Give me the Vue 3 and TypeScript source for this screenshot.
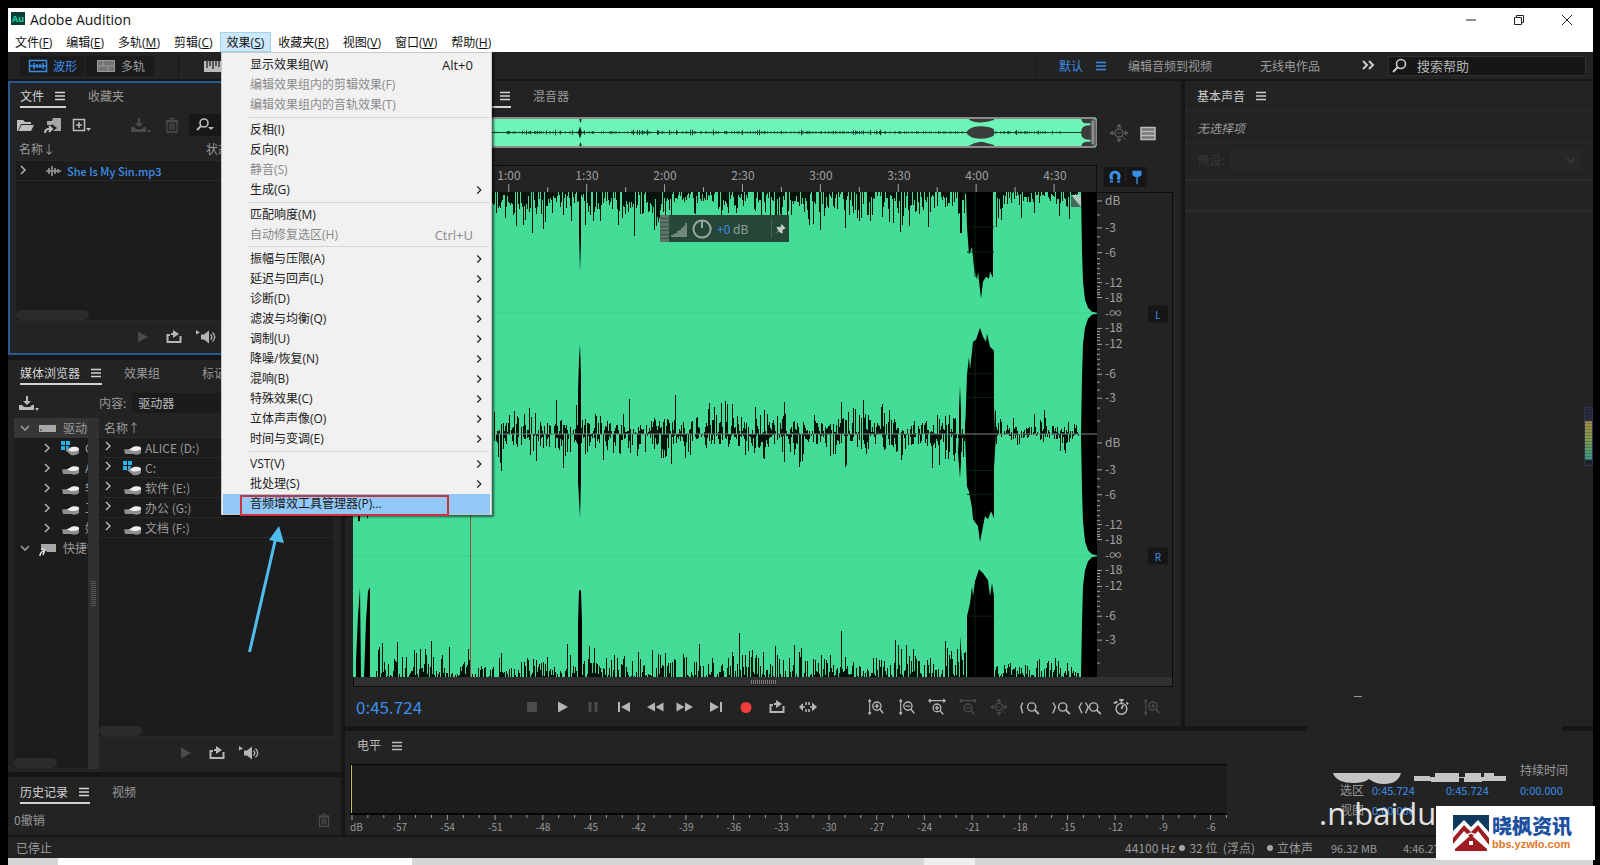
<script setup lang="ts">
import { h } from 'vue'

const art: Record<string, string> = {
  menu: '<path d="M5 6.500h10M5 10h10M5 13.500h10" stroke="currentColor" stroke-width="1.500"/>',
  folder: '<path d="M2 16V5h6l2 2h6v2H6L3 16zM6.500 10H19l-3 6H3.500z" fill="currentColor"/>',
  importer: '<path d="M4 10V6h5l1-3h8v13h-8l4-3-5-4v1z" fill="currentColor" opacity=".85"/><path d="M2 18q0-4 4-4h3m-3-3 3 3-3 3" fill="none" stroke="currentColor" stroke-width="2"/>',
  add: '<path d="M2.500 4.500h11v11h-11zM8 7v6M5 10h6" fill="none" stroke="currentColor" stroke-width="1.500"/><path d="M15 13h5l-2.500 3z" fill="currentColor"/>',
  tray: '<path d="M1 12h3l2 2h6l2-2h2v5H1zM8 3h2v5h3l-4 4-4-4h3zM17 15h4l-2 3z" fill="currentColor"/>',
  trash: '<path d="M5 6.500h10V17H5zM4 5.500h12M8 3.500h4M8 8v7M10 8v7M12 8v7" fill="none" stroke="currentColor" stroke-width="1.300"/>',
  find: '<circle cx="10" cy="8" r="4.500" fill="none" stroke="currentColor" stroke-width="1.600"/><path d="m7 11-5 5" stroke="currentColor" stroke-width="2"/>',
  findmenu: '<circle cx="9" cy="8" r="4" fill="none" stroke="currentColor" stroke-width="1.600"/><path d="m6 11-4 4" stroke="currentColor" stroke-width="2"/><path d="M13 12h6l-3 3z" fill="currentColor"/>',
  wavelet: '<path d="M3 10h15M6 7v6M9 5v10M12 7v6M15 8v4" stroke="currentColor" stroke-width="1.600"/>',
  waveview: '<path d="M1.500 4.500h17v11h-17zM2 10h16M6 7v6M9 8v4M12 8v4M15 7v6" fill="none" stroke="currentColor" stroke-width="1.500"/>',
  tracks: '<path d="M1 4h18v12H1z" fill="currentColor" opacity=".7"/><path d="M1.500 4.500h17v11h-17zM2 10h17M7 4v6M12 10v6" fill="none" stroke="currentColor"/>',
  spectral: '<path d="M1 5h18v11H1z" fill="currentColor"/><path d="M4 5v7M7 5v5M10 5v8M13 5v5M16 5v6" stroke="#222" stroke-width="1.300"/>',
  stop: '<path d="M5 5h10v10H5z" fill="currentColor"/>',
  play: '<path d="M5 4.500 15 10 5 15.500z" fill="currentColor"/>',
  pause: '<path d="M5.500 5h3v10h-3zM11.500 5h3v10h-3z" fill="currentColor"/>',
  first: '<path d="M4 5h2v10H4zM16 5v10L7 10z" fill="currentColor"/>',
  rewind: '<path d="M10 5.500v9L2 10zM18.500 5.500v9l-8-4.500z" fill="currentColor"/>',
  forward: '<path d="M1.500 5.500v9l8-4.500zM10 5.500v9l8-4.500z" fill="currentColor"/>',
  last: '<path d="M14 5h2v10h-2zM4 5v10l9-5z" fill="currentColor"/>',
  record: '<circle cx="10" cy="10.500" r="5.500" fill="#f23b3b"/>',
  loop: '<path d="M6 8H3.500v7h13V9M7 7h6" fill="none" stroke="currentColor" stroke-width="2"/><path d="m9 3 6 4-6 4z" fill="currentColor"/>',
  skip: '<path d="M3 10h4M12 10h4M8 5v3M8 12v3M11 5v3M11 12v3" stroke="currentColor" stroke-width="1.600"/><path d="m5 6-4 4 4 4zM14 5.500l5 4.500-5 4.500z" fill="currentColor"/>',
  speaker: '<path d="M1 3l4 2.500-4 2zM6 7.500h3l5-4v13l-5-4H6z" fill="currentColor"/><path d="M15.500 7.500q2.500 2.500 0 5M17.500 5.500q4.500 4.500 0 9" fill="none" stroke="currentColor" stroke-width="1.300"/>',
  zinv: '<path d="M3 2v16M1.500 4 3 2l1.500 2M1.500 16 3 18l1.500-2" fill="none" stroke="currentColor" stroke-width="1.300"/><circle cx="11" cy="9" r="4.600" fill="none" stroke="currentColor" stroke-width="1.500"/><path d="M8.500 9h5M11 6.500v5M14 12l4 5" stroke="currentColor" stroke-width="1.600"/>',
  zoutv: '<path d="M3 2v16M1.500 4 3 2l1.500 2M1.500 16 3 18l1.500-2" fill="none" stroke="currentColor" stroke-width="1.300"/><circle cx="11" cy="9" r="4.600" fill="none" stroke="currentColor" stroke-width="1.500"/><path d="M8.500 9h5M14 12l4 5" stroke="currentColor" stroke-width="1.600"/>',
  zinh: '<path d="M1 3h18M3 1 1 3l2 2M17 1l2 2-2 2" fill="none" stroke="currentColor" stroke-width="1.400"/><circle cx="10" cy="11" r="4.300" fill="none" stroke="currentColor" stroke-width="1.500"/><path d="M7.500 11h5M10 8.500v5M13 14l4 4" stroke="currentColor" stroke-width="1.600"/>',
  zouth: '<path d="M1 3h18M3 1 1 3l2 2M17 1l2 2-2 2" fill="none" stroke="currentColor" stroke-width="1.400"/><circle cx="10" cy="11" r="4.300" fill="none" stroke="currentColor" stroke-width="1.500"/><path d="M7.500 11h5M13 14l4 4" stroke="currentColor" stroke-width="1.600"/>',
  zfull: '<circle cx="10" cy="10" r="4" fill="none" stroke="currentColor" stroke-width="1.400"/><path d="M8 10h4M13 13l4 4M1 10l3-2v4zM19 10l-3-2v4zM10 1 8 4h4zM10 19l-2-3h4z" fill="currentColor" stroke="currentColor" stroke-width="1"/>',
  zleft: '<path d="M3 5 1 10l2 7" fill="none" stroke="currentColor" stroke-width="1.600"/><circle cx="13" cy="10" r="4.600" fill="none" stroke="currentColor" stroke-width="1.600"/><path d="m16 13 5 5" stroke="currentColor" stroke-width="2"/>',
  zright: '<path d="m2 5 3 5-3 7" fill="none" stroke="currentColor" stroke-width="1.600"/><circle cx="13" cy="10" r="4.600" fill="none" stroke="currentColor" stroke-width="1.600"/><path d="m16 13 5 5" stroke="currentColor" stroke-width="2"/>',
  zsel: '<path d="m1 5-3 5 3 7M5 5l3 5-3 7" fill="none" stroke="currentColor" stroke-width="1.600"/><circle cx="14" cy="10" r="4.600" fill="none" stroke="currentColor" stroke-width="1.600"/><path d="m17 13 5 5" stroke="currentColor" stroke-width="2"/>',
  timer: '<circle cx="10.500" cy="12" r="6" fill="none" stroke="currentColor" stroke-width="1.600"/><path d="M8 2h5M10.500 3v4M2 6l4-2M16 5l2 2M10.500 12l2-4" stroke="currentColor" stroke-width="2"/>',
  list: '<path d="M3 4.500h14v12H3z" fill="#777" stroke="currentColor" stroke-width="1.500"/><path d="M3 8.500h14M3 12.500h14" stroke="currentColor" stroke-width="1.500"/>',
  magnet: '<path d="M6 16v-5a4.500 4.500 0 1 1 8 0v5" fill="none" stroke="currentColor" stroke-width="3.500"/><path d="M3 13.500h14" stroke="#161616" stroke-width="1"/>',
  marker: '<path d="M5 3h10v5l-3 2H8L5 8z" fill="currentColor"/><path d="M10 9v9" stroke="currentColor" stroke-width="1.500"/>',
  right: '<path d="m8 6 4 4-4 4" fill="none" stroke="currentColor" stroke-width="1.400"/>',
  down: '<path d="m6 8 4 4 4-4" fill="none" stroke="currentColor" stroke-width="1.600"/>',
  more: '<path d="m5 5 4 4-4 4M11 5l4 4-4 4" fill="none" stroke="currentColor" stroke-width="2"/>',
  drive: '<path d="M2 11.500 8 11l4-2q7-1 7 3v3q-3 3-8 1H3z" fill="#909090"/><path d="m7 11.500 5-3q8-1 7 3-4 2-8 1.500z" fill="#efefef"/>',
  sysdrive: '<path d="M5 12l6-3q8-1 8 3v3q-3 3-8 2z" fill="#909090"/><path d="m8 12 4-3q7-1 7 3-4 2-8 1.500z" fill="#efefef"/><path d="M1 3h4v4H1zM6 3h4v4H6zM1 8h4v4H1zM6 8h3l-1 3H6z" fill="#25b3e8"/>',
  rack: '<path d="M1 7h17v7H1z" fill="#a8a8a8"/><path d="M2 12h2" stroke="#333"/>',
  shortcut: '<path d="M3 6h15v8H9l-2-3H3z" fill="#a8a8a8"/><path d="M2 18q0-4 4-5M3 11l4 1-2 5" fill="none" stroke="#ddd" stroke-width="1.500"/>',
  pin: '<path d="m11 3 6 6-2 .5-2.500 2.500.5 3-2 1-3.500-3.500L3 17l4-5.500L4.500 8l2-1 3 .5L11 5z" fill="currentColor"/>'
}
const Ic = (p: { n: string }) => h('svg', { viewBox: '0 0 20 20', class: 'ic', 'aria-hidden': 'true', innerHTML: art[p.n] })

const menubar = [['文件', 'F'], ['编辑', 'E'], ['多轨', 'M'], ['剪辑', 'C'], ['效果', 'S'], ['收藏夹', 'R'], ['视图', 'V'], ['窗口', 'W'], ['帮助', 'H']]

interface Item { t: string; off?: boolean; sub?: boolean; key?: string; hot?: boolean }
const sub = (t: string): Item => ({ t, sub: true })
const groups: Item[][] = [
  [{ t: '显示效果组(W)', key: 'Alt+0' }, { t: '编辑效果组内的剪辑效果(F)', off: true }, { t: '编辑效果组内的音轨效果(T)', off: true }],
  [{ t: '反相(I)' }, { t: '反向(R)' }, { t: '静音(S)', off: true }, sub('生成(G)')],
  [{ t: '匹配响度(M)' }, { t: '自动修复选区(H)', off: true, key: 'Ctrl+U' }],
  ['振幅与压限(A)', '延迟与回声(L)', '诊断(D)', '滤波与均衡(Q)', '调制(U)', '降噪/恢复(N)', '混响(B)', '特殊效果(C)', '立体声声像(O)', '时间与变调(E)'].map(sub),
  [sub('VST(V)'), sub('批处理(S)'), { t: '音频增效工具管理器(P)...', hot: true }]
]

const tree = [['sysdrive', 'C:'], ['drive', 'ALICE'], ['drive', '软件'], ['drive', '工作'], ['drive', '娱乐']]
const drives = [['drive', 'ALICE (D:)'], ['sysdrive', 'C:'], ['drive', '软件 (E:)'], ['drive', '办公 (G:)'], ['drive', '文档 (F:)']]
const times = ['0:30', '1:00', '1:30', '2:00', '2:30', '3:00', '3:30', '4:00', '4:30']
const transport = [['stop', '停止', 1], ['play', '播放', 0], ['pause', '暂停', 1], ['first', '移到开头', 0], ['rewind', '快退', 0], ['forward', '快进', 0], ['last', '移到结尾', 0], ['record', '录制', 0], ['loop', '循环播放', 0], ['skip', '跳过所选项目', 0]] as const
const zooms = [['zinv', '放大振幅', 0], ['zoutv', '缩小振幅', 0], ['zinh', '放大时间', 0], ['zouth', '缩小时间', 1], ['zfull', '全部缩小', 1], ['zleft', '放大入点', 0], ['zright', '放大出点', 0], ['zsel', '缩放至选区', 0], ['timer', '缩放至时间', 0], ['zinv', '缩放所选音轨', 1]] as const
const levels = Array.from({ length: 18 }, (_, i) => String(-57 + i * 3))

/* Amplitude scale: label and offset inside one 243-unit channel */
const marks: [string, number][] = [['dB', 8], ['-3', 35], ['-6', 60], ['-12', 90], ['-18', 105], ['-∞', 121], ['-18', 136], ['-12', 152], ['-6', 182], ['-3', 206]]
const scale = [0, 243].flatMap(o => marks.map(([t, y]) => ({ t, top: ((y + o) / 486) * 100 })))
const scaleTicks = [0, 243].flatMap(o => [8, 22, 35, 44, 52, 60, 66, 71, 76, 81, 86, 90, 94, 97, 100, 102, 105, 136, 139, 142, 145, 148, 152, 157, 162, 167, 172, 177, 182, 190, 198, 206, 216, 229].map(y => `M0 ${y + o}h${marks.some(m => m[1] === y) ? 5 : 3}`)).join('')

/* Waveform of the open clip, 744 x 486 units */
let seed = 20177
const rnd = () => ((seed = (seed * 1103515245 + 12345) % 2147483648) / 2147483648)
function noise(y: number, dir: number, max: number, floor: number, from: number, gap: number): string {
  let d = ''
  let swell = 0.6
  for (let x = from; x < 726; x++) {
    if (x % 11 === 0) swell = 0.35 + rnd() * 0.65
    const quiet = x > 645 ? 0.65 : 1
    if (x > 612 && x < 642) continue
    let len = (Math.pow(rnd(), 1.8) * max + rnd() * floor) * swell * quiet
    if (rnd() < 0.02) len = max * (0.9 + rnd() * 0.4) * quiet
    if (rnd() < gap || len < 1) continue
    d += `M${x} ${y}h1v${Math.round(len) * dir}h-1z`
  }
  return d
}
const waveNoise = noise(0, 1, 34, 14, 130, 0.2) + noise(242, -1, 30, 6, 130, 0.25) + noise(242, 1, 30, 8, 130, 0.25) + noise(486, -1, 36, 4, 22, 0.3)
const shapes = [
  'M226 0V40L227 80 228 50V0z',
  'M225 243V200L226 168 227 152 228 185 228 290 227 327 225 290z',
  'M225 486V432L226 399H228L229 430V486z',
  'M607 0V41h2V0zM606 243V218L607 194 608 220V270L607 287 605 260zM607 486V445L609 470V486z',
  'M613 0L614 35 616 63 619 55 621 76 624 88 625 80 628 107 630 90 633 85 636 87 637 80 640 86V0z',
  'M612 243L614 183 616 165 617 178 620 150 623 148 627 136 630 145 633 150 634 142 637 155 641 159V243L642 215 643 243 641 276V327L638 320 635 328 632 325 630 335 627 351 625 335 620 328 619 317 616 300 614 295z',
  'M614 486V425L617 412 619 395 620 405 622 390 626 378 630 382 635 389 637 405 639 392 641 405V486z',
  'M728 0L729 60 730 90 732 108 735 116 739 120 744 121V0zM744 122L739 123 735 127 732 136 730 152 729 185 728 243 729 300 730 330 732 350 735 359 739 363 744 364V122zM744 365L739 366 735 370 732 379 730 395 729 430 728 486H744z',
  'M3 486V470L5 425 7 396 8 486zM11 486L13 430 15 400 17 396V486zM5 300V330L7 330V300zM14 300V327h1V300z'
].join('')
const miniNoise = (() => {
  let d = ''
  for (let x = 130; x < 708; x++) {
    if (x > 610 && x < 642) continue
    const a = rnd() * 1.2 + (rnd() < 0.06 ? 1.5 : 0)
    d += `M${x} ${15 - a}h1v${a * 2}h-1z`
    if (rnd() < 0.15) d += `M${x} 0h1v2h-1zM${x} 28h1v2h-1z`
  }
  return d
})()
const rulerTicks = Array.from({ length: 19 }, (_, i) => `M${39 * i} 27v${i % 2 ? -5 : -8}`).join('')
const levelTicks = Array.from({ length: 56 }, (_, i) => `M${2 + i * 15.9} 0v${i % 3 ? 3 : 5}`).join('')
</script>

<template>
  <div class="screen">
    <div class="window">
      <header class="title">
        <span class="app">Au</span>
        <h1>Adobe Audition</h1>
        <div class="wc">
          <button aria-label="最小化"><svg viewBox="0 0 12 12"><path d="M1 6h10" /></svg></button>
          <button aria-label="还原"><svg viewBox="0 0 12 12"><path d="M1.500 3.500h7v7h-7zM3.500 3.500v-2h7v7h-2" /></svg></button>
          <button aria-label="关闭"><svg viewBox="0 0 12 12"><path d="m1 1 10 10M11 1 1 11" /></svg></button>
        </div>
      </header>
      <nav class="menubar">
        <button v-for="m in menubar" :key="m[1]" :class="{ open: m[1] === 'S' }">{{ m[0] }}(<u>{{ m[1] }}</u>)</button>
      </nav>

      <div class="toolbar">
        <div class="views">
          <button class="view on"><Ic n="waveview" />波形</button>
          <button class="view"><Ic n="tracks" />多轨</button>
        </div>
        <i class="vr"></i>
        <button class="spec" aria-label="频谱"><Ic n="spectral" /></button>
        <div class="spaces">
          <button class="blue">默认</button>
          <button class="blue ham" aria-label="工作区菜单"><Ic n="menu" /></button>
          <button class="sp2">编辑音频到视频</button>
          <button class="sp3">无线电作品</button>
          <button class="ham lit" aria-label="更多"><Ic n="more" /></button>
        </div>
        <label class="search"><Ic n="find" /><input type="text" placeholder="搜索帮助" aria-label="搜索帮助"></label>
      </div>

      <main class="work">
        <div class="left">
          <section class="panel files">
            <div class="tabs"><button class="tab on">文件<Ic n="menu" /></button><button class="tab">收藏夹</button></div>
            <div class="ftools">
              <button aria-label="打开文件"><Ic n="folder" /></button>
              <button aria-label="导入文件"><Ic n="importer" /></button>
              <button aria-label="新建"><Ic n="add" /></button>
              <button class="dim push" aria-label="插入"><Ic n="tray" /></button>
              <button class="dim" aria-label="删除"><Ic n="trash" /></button>
              <button class="fsearch" aria-label="搜索"><Ic n="findmenu" /></button>
            </div>
            <div class="fhead"><span>名称<b>↓</b></span><span>状态</span></div>
            <div class="flist">
              <div class="frow"><Ic n="right" /><Ic n="wavelet" class="wl" /><a href="#">She Is My Sin.mp3</a></div>
              <i class="bar"></i>
            </div>
            <div class="mini">
              <button class="dim" aria-label="播放"><Ic n="play" /></button>
              <button aria-label="循环"><Ic n="loop" /></button>
              <button aria-label="自动播放"><Ic n="speaker" /></button>
            </div>
          </section>

          <section class="panel media">
            <div class="tabs"><button class="tab on">媒体浏览器<Ic n="menu" /></button><button class="tab">效果组</button><button class="tab third">标记</button></div>
            <div class="mtools">
              <button aria-label="导入"><Ic n="tray" /></button>
              <label for="src">内容:</label>
              <select id="src"><option>驱动器</option></select>
            </div>
            <div class="browser">
              <div class="tree">
                <div class="trow sel"><Ic n="down" /><Ic n="rack" />驱动器</div>
                <div v-for="t in tree" :key="t[1]" class="trow in"><Ic n="right" /><Ic :n="t[0]" />{{ t[1] }}</div>
                <div class="trow"><Ic n="down" /><Ic n="shortcut" />快捷键</div>
                <i class="bar"></i>
              </div>
              <div class="split"><i></i></div>
              <div class="dcol">
                <div class="dlist">
                  <div class="dhead">名称<b>↑</b></div>
                  <div v-for="d in drives" :key="d[1]" class="drow"><Ic n="right" /><Ic :n="d[0]" />{{ d[1] }}</div>
                  <i class="bar"></i>
                </div>
                <div class="mini">
                  <button class="dim" aria-label="播放"><Ic n="play" /></button>
                  <button aria-label="循环"><Ic n="loop" /></button>
                  <button aria-label="自动播放"><Ic n="speaker" /></button>
                </div>
              </div>
            </div>
          </section>

          <section class="panel history">
            <div class="tabs"><button class="tab on">历史记录<Ic n="menu" /></button><button class="tab">视频</button></div>
            <div class="undo"><span>0撤销</span><button class="dim" aria-label="删除"><Ic n="trash" /></button></div>
          </section>
        </div>

        <div class="rest">
          <div class="upper">
            <section class="panel editor">
              <div class="tabs"><button class="tab on ed"><span>编辑器: Sin.mp3</span><Ic n="menu" /></button><button class="tab">混音器</button></div>
              <div class="grid">
                <svg class="overview" viewBox="0 0 744 30" preserveAspectRatio="none" aria-hidden="true">
                  <rect width="744" height="30" rx="4" fill="#6cf5b6" />
                  <path :d="miniNoise" fill="#12402e" />
                  <path d="M130 15H728" stroke="#12402e" />
                  <path d="M226 0h3l-1 5h-1zM225 15l2-6 2 6-2 6zM226 30h3l-1-5h-1z" fill="#102018" />
                  <path d="M612 0h29v3q-12 4-22 1zM613 15q4-6 14-6 10 0 14 3v6q-4 3-14 3-10 0-14-6zM613 30q8-6 16-6l12 3v3zM728 0h12v6h-8q-4-1-4-6zM728 15q0-7 8-7h6v14h-6q-8 0-8-7zM728 30q0-5 5-6h8v6z" fill="#3a3c3b" />
                  <rect x="1" y="1" width="742" height="28" rx="4" fill="none" stroke="#8a8a8a" stroke-width="2" />
                  <rect x="738" y="3" width="4" height="24" rx="1" fill="#8e8e8e" stroke="#444" />
                </svg>
                <div class="ovtools"><button class="faint" aria-label="全部缩小"><Ic n="zfull" /></button><button aria-label="列表"><Ic n="list" /></button></div>
                <div class="ruler">
                  <svg viewBox="0 0 744 27" preserveAspectRatio="none" aria-hidden="true"><path :d="rulerTicks" stroke="#aaa" /></svg>
                  <div class="times"><span v-for="t in times" :key="t">{{ t }}</span></div>
                </div>
                <div class="snap"><button aria-label="对齐"><Ic n="magnet" /></button><button aria-label="标记"><Ic n="marker" /></button></div>
                <div class="wave">
                  <svg viewBox="0 0 744 486" preserveAspectRatio="none" aria-hidden="true">
                    <rect width="744" height="486" fill="#45dc98" />
                    <path d="M0 121.500H744M0 364.500H744" stroke="#40cf8f" />
                    <path :d="waveNoise" fill="#04140c" shape-rendering="crispEdges" />
                    <path :d="shapes" />
                    <path d="M614 35H641M614 60H641M614 182H641M614 206H641M614 279H641M614 303H641M614 425H641M622 0V85M622 150V330M622 400V486" stroke="#0a230c" />
                    <path d="M0 242.500H744" stroke="#7d8a84" />
                    <path d="M117.500 0V486" stroke="#36a070" /><path d="M117.500 0V486" stroke="#a83a28" stroke-dasharray="3 1" />
                    <path d="M718 3h10v12z" fill="#aecdbd" /><path d="M718 3v12h10z" fill="#49695a" />
                  </svg>
                  <div class="hud">
                    <i class="hgrip"></i>
                    <svg class="hbars" viewBox="0 0 16 16" aria-hidden="true"><path d="M1 16v-2M3 16v-3M5 16v-4M7 16v-6M9 16v-7M11 16v-9M13 16v-11M15 16V2" stroke="#93a39b" stroke-width="1.400" /></svg>
                    <svg class="knob" viewBox="0 0 20 20" aria-hidden="true"><path d="M10 1.500a8.500 8.500 0 1 0 .1 0M10 2v7" fill="none" stroke="#9aa8a1" stroke-width="2" /></svg>
                    <span><b>+0</b> dB</span>
                    <button aria-label="固定"><Ic n="pin" /></button>
                  </div>
                </div>
                <div class="scale">
                  <svg viewBox="0 0 6 486" preserveAspectRatio="none" aria-hidden="true"><path :d="scaleTicks" stroke="#a5a5a5" /></svg>
                  <span v-for="(s, i) in scale" :key="i" :style="{ top: s.top + '%' }">{{ s.t }}</span>
                  <button class="ch l">L</button><button class="ch r">R</button>
                </div>
                <div class="strip"><i></i></div>
              </div>
              <div class="transport">
                <output>0:45.724</output>
                <div class="btns"><button v-for="b in transport" :key="b[0]" :class="{ dim: b[2] }" :aria-label="b[1]"><Ic :n="b[0]" /></button></div>
                <div class="btns zooms"><button v-for="b in zooms" :key="b[1]" :class="{ dim: b[2] }" :aria-label="b[1]"><Ic :n="b[0]" /></button></div>
              </div>
            </section>

            <section class="panel sound">
              <div class="stitle">基本声音<Ic n="menu" /></div>
              <p>无选择项</p>
              <div class="preset"><label for="pre">预设:</label><select id="pre" disabled></select><Ic n="down" /></div>
              <div class="blank"></div>
            </section>
          </div>

          <section class="panel lower">
            <i class="erase"></i>
            <div class="meter">
              <div class="ltitle"><span>电平</span><Ic n="menu" /></div>
              <div class="lbox"></div>
              <svg class="lticks" viewBox="0 0 877 5" preserveAspectRatio="none" aria-hidden="true"><path :d="levelTicks" stroke="#9a9a9a" /></svg>
              <div class="lnums"><span class="unit">dB</span><span v-for="l in levels" :key="l">{{ l }}</span></div>
            </div>
            <table class="range">
              <colgroup><col class="c0"><col class="c1"><col class="c1"><col></colgroup>
              <tbody>
                <tr><td></td><td></td><td></td><th>持续时间</th></tr>
                <tr><th>选区</th><td>0:45.724</td><td>0:45.724</td><td>0:00.000</td></tr>
                <tr><th>视图</th><td>0:00.000</td><td></td><td></td></tr>
              </tbody>
            </table>
          </section>
        </div>
      </main>

      <footer class="status">
        <span>已停止</span>
        <div class="info">
          <span class="st1">44100 Hz<i class="dot"></i>32 位&nbsp; (浮点)</span>
          <span class="st2"><i class="dot"></i>立体声</span>
          <span class="st3">96.32 MB</span>
          <span class="st4">4:46.275</span>
        </div>
      </footer>
      <div class="task"><i class="t1"></i><i class="t2"></i></div>

      <div class="popup" role="menu">
        <div v-for="(g, i) in groups" :key="i" class="group">
          <button v-for="m in g" :key="m.t" role="menuitem" :disabled="m.off" :class="{ hot: m.hot }">
            <span>{{ m.t }}</span><kbd v-if="m.key">{{ m.key }}</kbd><Ic v-if="m.sub" n="right" />
          </button>
        </div>
        <i class="mark"></i>
        <svg class="arrow" viewBox="0 0 40 130" aria-hidden="true"><path d="M5.500 127 32 12" stroke="#4fbdee" stroke-width="3" /><path d="M35 1 25 15l15 3z" fill="#4fbdee" /></svg>
      </div>

      <div class="gauge"></div>
      <div class="stamp">
        <svg viewBox="0 0 180 14" aria-hidden="true"><path d="M0 1h68q-3 11-17 11-9 0-15-5-5 4-15 4Q3 11 0 1zM81 4h16v1h5V1h24v4h6V1h16v4h3V1h10v3h12v5h-24v1h-18V6h-5v4H98V9H81z" fill="#c4c4c4" /></svg>
        <span>.n.baidu.com</span>
      </div>
      <i class="speck"></i>
      <div class="brand">
        <svg viewBox="0 0 36 36" aria-hidden="true"><path d="M0 0h36v17L25 5l-7 7-7-7L0 16z" fill="#0d3a5e" /><path d="M0 23 11 10l7 7 7-7 11 13v7L25 16l-7 7-7-7L0 29z" fill="#9f1c20" /><path d="M2 34 18 20l16 14v2H2z" fill="#9f1c20" /><path d="M0 34 11 21l7-3 7 3 11 13" fill="none" stroke="#fff" stroke-width="1.500" /><path d="M16 26h4v4h-4z" fill="#fff" /></svg>
        <div><strong>晓枫资讯</strong><em>bbs.yzwlo.com</em></div>
      </div>
    </div>
  </div>
</template>

<style>
body { margin: 0; background: #000; }
</style>

<style scoped>
* { box-sizing: border-box; }
.screen { min-height: 100vh; padding: 8px 7px 0 8px; background: #000; display: flex; overflow: hidden; font: 12px/16px "Noto Sans CJK SC", sans-serif; color: #9a9a9a; }
.window { position: relative; flex: 1; min-width: 0; display: flex; flex-direction: column; background: #161616; }
button, select, input { font: inherit; color: inherit; background: none; border: 0; padding: 0; margin: 0; outline: 0; }
button { display: flex; align-items: center; white-space: nowrap; }
.ic { width: 20px; height: 20px; flex: none; overflow: visible; display: block; }
.dim { color: #4b4b4b !important; }
b { font-weight: 400; }

.title { height: 24px; background: #fff; display: flex; align-items: center; padding-left: 3px; color: #111; }
.app { width: 14px; height: 13px; background: #073f34; color: #1fd0a8; font: bold 9px/13px "Open Sans", sans-serif; text-align: center; margin-bottom: 3px; }
h1 { margin: 0 0 0 5px; font: 14px/16px "Open Sans", sans-serif; flex: 1; }
.wc { display: flex; gap: 36px; padding-right: 20px; }
.wc svg { width: 12px; height: 12px; fill: none; stroke: #222; display: block; }
.menubar { height: 20px; background: #fff; display: flex; color: #111; font: 12px/18px "Open Sans", "Noto Sans CJK SC", sans-serif; }
.menubar button { padding: 1px 6px 0; border: 1px solid transparent; }
.menubar .open { background: #cce8fa; border-color: #9fd3f2; }

.toolbar { height: 29px; background: #232323; border-bottom: 2px solid #161616; display: flex; align-items: center; }
.views { display: flex; margin-left: 12px; background: #1b1b1b; height: 20px; width: 134px; }
.view { padding-left: 8px; gap: 5px; width: 64px; }
.view + .view { padding-left: 11px; width: 70px; border-left: 1px solid #272727; }
.on.view, .blue { color: #3b8ee8; }
.vr { width: 1px; height: 24px; background: #171717; margin-left: 24px; }
.spec { margin-left: 24px; color: #bbb; }
.spaces { margin-left: auto; display: flex; align-items: center; border-left: 1px solid #191919; padding-left: 22px; height: 26px; }
.ham { margin-left: 8px; }
.sp2 { margin-left: 17px; }
.sp3 { margin-left: 48px; }
.sp3 + .ham { margin: 0 10px 0 38px; }
.lit { color: #ccc; }
.search { width: 198px; height: 20px; margin-right: 7px; background: #161616; border: 1px solid #303030; display: flex; align-items: center; padding-left: 2px; color: #ccc; }
.search input { margin-left: 6px; width: 150px; font-size: 13px; }
.search input::placeholder { color: #b5b5b5; opacity: 1; }

.work { flex: 1; display: flex; gap: 4px; padding-bottom: 2px; }
.left { width: 333px; flex: none; display: flex; flex-direction: column; gap: 5px; }
.rest { flex: 1; min-width: 0; display: flex; flex-direction: column; gap: 5px; }
.upper { flex: 1; display: flex; gap: 4px; }
.panel { background: #232323; min-width: 0; }
.tabs { display: flex; gap: 22px; padding: 4px 0 0 12px; height: 28px; }
.tab { height: 23px; align-items: center; border-bottom: 2px solid transparent; }
.tab.on { color: #d4d4d4; border-color: #d4d4d4; }
.tab .ic { margin: 0 -4px 0 6px; }
.tab.third { margin-left: 20px; }

.files { height: 274px; border: 2px solid #2a5790; display: flex; flex-direction: column; }
.files .tabs { padding: 2px 0 0 10px; height: 32px; }
.ftools { display: flex; height: 20px; align-items: center; padding-left: 5px; color: #bdbdbd; gap: 8px; }
.ftools .push { margin: 0 4px 0 31px; }
.fsearch { background: #181818; padding-left: 6px; width: 140px; height: 22px; margin-left: -1px; }
.fhead { display: flex; height: 25px; align-items: center; padding: 2px 0 0 9px; }
.fhead span:first-child { width: 187px; }
.flist { flex: 1; margin-left: 6px; background: #1c1c1c; border: solid #292929; border-width: 1px 0; display: flex; flex-direction: column; }
.frow { height: 20px; display: flex; align-items: center; border-bottom: 1px solid #292929; }
.frow > .ic:first-child { margin: 0 10px 2px -3px; color: #bbb; }
.frow .wl { margin-right: 4px; }
.frow a { color: #3b8ee8; text-decoration: none; font-size: 11px; font-weight: 500; }
.bar { display: block; width: 43px; height: 10px; border-radius: 5px; background: #2b2b2b; margin-top: auto; }
.files .bar { width: 73px; }
.mini { display: flex; gap: 11px; height: 35px; align-items: center; color: #b5b5b5; }
.files .mini { padding-left: 123px; height: 32px; }

.media { flex: 1; display: flex; flex-direction: column; padding-bottom: 3px; }
.media .tabs { height: 31px; padding-top: 2px; }
.mtools { display: flex; align-items: center; height: 24px; margin-bottom: 3px; padding-left: 10px; color: #9a9a9a; }
.mtools button { color: #bbb; margin-right: 61px; }
.mtools select { appearance: none; background: #1b1b1b; color: #bbb; margin-left: 6px; padding-left: 6px; flex: 1; margin-right: 6px; height: 20px; }
.browser { flex: 1; display: flex; padding-left: 6px; }
.tree { width: 74px; overflow: hidden; background: #1c1c1c; display: flex; flex-direction: column; border-bottom: 1px solid #292929; }
.trow { height: 20px; display: flex; align-items: center; white-space: nowrap; gap: 5px; }
.trow .ic:first-child { margin: 0 -2px 0 1px; }
.trow.sel { background: #353535; }
.trow.in { padding-left: 22px; }
.in .ic:first-child { color: #bbb; }
.split { width: 11px; background: #303030; padding: 163px 0 0 3px; }
.split i { display: block; width: 5px; height: 25px; background: repeating-linear-gradient(#555 0 1px, transparent 1px 2px); }
.dcol { flex: 1; display: flex; flex-direction: column; }
.dlist { flex: 1; background: #1c1c1c; margin-right: 6px; border: solid #292929; border-width: 0 1px 1px 0; display: flex; flex-direction: column; }
.dhead { height: 20px; padding: 2px 0 0 5px; background: #232323; border-bottom: 1px solid #292929; }
.drow { height: 20px; display: flex; align-items: center; border-bottom: 1px solid #292929; gap: 3px; }
.drow .ic:first-child { margin: 0 1px 3px -1px; color: #bbb; }
.dcol .mini { padding-left: 77px; height: 32px; }

.history { height: 58px; }
.undo { display: flex; justify-content: space-between; align-items: center; padding: 6px 8px 0 6px; }
.undo .ic { width: 18px; height: 18px; }

.editor { flex: 1; display: flex; flex-direction: column; }
.editor .tabs { height: 36px; }
.ed span { display: block; width: 132px; text-align: left; }
.grid { flex: 1; display: grid; grid-template-columns: minmax(0, 1fr) 76px; grid-template-rows: 31px 17px 27px 1fr 10px; margin: 0 8px; }
.overview { width: 100%; height: 31px; display: block; grid-row: 1; }
.ovtools { grid-row: 1; display: flex; align-items: center; gap: 9px; padding-left: 12px; color: #bbb; }
.faint { color: #5b5b5b; }
.ruler { grid-row: 3; position: relative; border: solid #0c0c0c; border-width: 1px 1px 0 0; }
.ruler svg { position: absolute; inset: 0; width: 100%; height: 100%; }
.times { display: flex; padding: 1px 0 0 39px; }
.times span { width: 78px; text-align: center; color: #a0a0a0; }
.snap { grid-row: 3; display: flex; gap: 1px; padding: 2px 0 0 7px; color: #3b8ee8; }
.snap button { background: #161616; width: 21px; height: 20px; justify-content: center; }
.snap .ic { width: 18px; height: 18px; }
.wave { grid-row: 4; position: relative; }
.wave > svg { position: absolute; inset: 0; width: 100%; height: 100%; }
.hud { position: absolute; left: 307px; top: 23px; width: 129px; height: 27px; background: #264638; display: flex; align-items: center; gap: 5px; }
.hgrip { width: 9px; height: 27px; background: repeating-linear-gradient(#5f7268 0 3px, #3b5549 3px 4px); margin-right: -3px; }
.hbars { width: 16px; height: 16px; }
.knob { width: 20px; height: 20px; }
.hud span { color: #93a39b; }
.hud b { color: #3b8ee8; }
.hud button { margin-left: auto; border-left: 1px solid #456155; color: #c4cdc8; padding: 0 1px; }
.hud .ic { width: 15px; height: 18px; }
.scale { grid-row: 4; position: relative; border: solid #0c0c0c; border-width: 1px 1px 0 0; color: #a0a0a0; }
.scale svg { position: absolute; left: 0; top: 0; width: 6px; height: 100%; }
.scale span { position: absolute; left: 8px; margin-top: -1px; transform: translateY(-50%); }
.ch { position: absolute; right: 4px; width: 20px; height: 17px; background: #161616; color: #3b8ee8; justify-content: center; font-size: 10px; transform: translateY(-50%); }
.ch.l { top: 25%; }
.ch.r { top: 75%; }
.strip { grid-row: 5; grid-column: 1 / 3; background: #303030; border: solid #0c0c0c; border-width: 0 1px 1px; display: flex; align-items: center; justify-content: center; }
.strip i { width: 25px; height: 4px; background: repeating-linear-gradient(90deg, #777 0 1px, transparent 1px 2px); }
.transport { height: 39px; display: flex; align-items: center; padding: 0 14px 0 11px; }
output { font-size: 17px; line-height: 24px; color: #3b8ee8; width: 161px; }
.btns { display: grid; grid-template-columns: repeat(10, 1fr); width: 306px; color: #b5b5b5; }
.btns button { justify-content: center; }
.zooms { margin-left: auto; }
.zooms .ic { width: 18px; height: 18px; }

.sound { width: 408px; flex: none; }
.stitle { display: flex; align-items: center; height: 30px; padding-left: 12px; color: #ccc; gap: 6px; border-bottom: 1px solid #2b2b2b; }
.sound p { margin: 0; height: 32px; padding: 9px 12px 0; font-style: italic; border-bottom: 1px solid #2b2b2b; }
.preset { height: 38px; display: flex; align-items: center; padding: 0 12px 3px; border-bottom: 2px solid #2b2b2b; color: #3a3a3a; }
.preset select { flex: 1; height: 22px; appearance: none; background: #272727; margin-left: 6px; opacity: 1; }
.preset .ic { margin-left: -20px; color: #3a3a3a; }
.blank { height: 31px; border-bottom: 2px solid #2b2b2b; }

.lower { position: relative; height: 104px; display: flex; justify-content: space-between; }
.erase { position: absolute; top: -5px; right: 31px; width: 255px; height: 5px; background: #232323; }
.meter { flex: 1; max-width: 882px; padding-left: 5px; }
.ltitle { display: flex; align-items: flex-start; gap: 6px; padding: 6px 0 0 7px; height: 33px; color: #bbb; }
.ltitle .ic { margin-top: -1px; }
.lbox { height: 51px; background: #1c1c1c; border: solid #050505; border-width: 1px 0 2px 1px; box-shadow: inset 1px 0 #c3c145; }
.lticks { display: block; width: 100%; height: 5px; }
.lnums { display: flex; font-size: 10px; line-height: 14px; margin-right: -8px; }
.lnums span { flex: 1; text-align: center; }
.lnums .unit { flex: none; width: 26px; text-align: left; }
.range { border-collapse: collapse; table-layout: fixed; margin: 29px 26px auto 0; width: 227px; line-height: 18px; }
.c0 { width: 32px; }
.c1 { width: 74px; }
.range th { font-weight: 400; text-align: left; padding: 0; white-space: nowrap; height: 20px; }
.range td { color: #3b8ee8; padding: 0; font-size: 11px; height: 20px; }

.status { height: 21px; background: #232323; display: flex; align-items: center; padding-left: 8px; justify-content: space-between; }
.info { display: grid; grid-template-columns: 142px 64px 72px 190px; }
.info span { display: flex; align-items: center; white-space: nowrap; }
.st3, .st4 { font-size: 11px; }
.dot { width: 6px; height: 6px; border-radius: 50%; background: #a5a5a5; margin: 0 4px; }
.st2 .dot { margin-left: 0; }
.task { height: 7px; background: #d8d5d5; display: flex; }
.t1 { width: 354px; margin-left: 50px; background: #fff; }
.t2 { width: 51px; margin-left: 512px; background: #efefef; }

.popup { position: absolute; left: 213px; top: 44px; width: 271px; background: #f1f1f1; border: 1px solid #c8c8c8; padding: 2px 1px 0; box-shadow: 2px 2px 2px #0008; color: #1a1a1a; font: 12px/16px "Open Sans", "Noto Sans CJK SC", sans-serif; }
.group + .group { margin-top: 5px; position: relative; }
.group + .group:nth-child(4) { margin-top: 4px; }
.group + .group::before { content: ""; position: absolute; top: -3px; left: 26px; right: 1px; height: 1px; background: #d6d6d6; }
.popup button { width: 100%; height: 20px; padding: 0 0 0 27px; text-align: left; }
.popup button:disabled { color: #8a8a8a; }
.popup span { flex: 1; }
.popup kbd { font: inherit; font-size: 13px; margin-right: 17px; }
.popup .ic { width: 18px; height: 18px; margin-right: 2px; }
.popup .hot { background: #92c8f8; }
.mark { position: absolute; left: 18px; bottom: -2px; width: 209px; height: 21px; border: 2px solid #d0323a; }
.arrow { position: absolute; left: 22px; top: 472px; width: 40px; height: 130px; }

.gauge { position: absolute; right: 0; top: 399px; width: 9px; height: 59px; border: 1px solid #2d3448; background: repeating-linear-gradient(#0003 0 1px, transparent 1px 3px), linear-gradient(#2a2c40 22%, #a08a4e 24%, #7f9a4c 55%, #3a9a8c 90%, #20242c 92%); }
.stamp { position: absolute; right: 49px; bottom: 33px; width: 225px; }
.stamp svg { position: absolute; left: 14px; top: -16px; width: 180px; height: 14px; }
.stamp span { display: block; padding-top: 6px; font: 31px/38px "Open Sans", sans-serif; color: #e2e2e2; white-space: nowrap; }
.speck { position: absolute; right: 231px; bottom: 168px; width: 8px; height: 1px; background: #999; }
.brand { position: absolute; right: -2px; bottom: 5px; width: 159px; height: 54px; background: #fff; display: flex; align-items: center; padding-left: 17px; gap: 3px; }
.brand svg { width: 36px; height: 36px; }
.brand div { display: flex; flex-direction: column; }
.brand strong { font-size: 20px; line-height: 22px; color: #1c4f9e; font-weight: 900; }
.brand em { font: bold 11px/14px "Liberation Sans", sans-serif; color: #e2762a; }
</style>
